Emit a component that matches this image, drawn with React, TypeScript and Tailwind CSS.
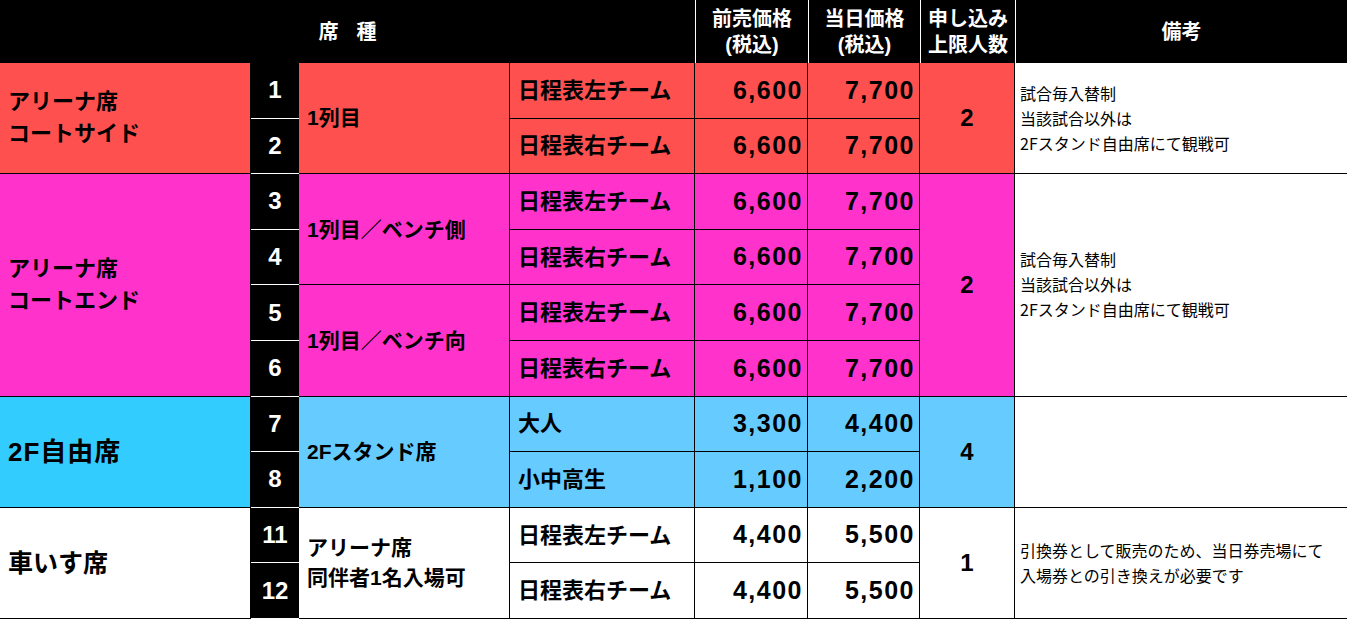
import type { ReactNode } from "react";

interface SeatRow {
  no: string;
  kind: string;
  advance: string;
  sameDay: string;
}

interface SubGroup {
  name: string[];
  nameSize: string;
  rows: SeatRow[];
}

interface SeatGroup {
  label: string[];
  labelSize: string;
  labelBg: string;
  bg: string;
  subs: SubGroup[];
  limit: string;
  notes: string[];
}

const leftRight = (advance: string, sameDay: string, start: number): SeatRow[] => [
  { no: String(start), kind: "日程表左チーム", advance, sameDay },
  { no: String(start + 1), kind: "日程表右チーム", advance, sameDay },
];

const notesSwap = ["試合毎入替制", "当該試合以外は", "2Fスタンド自由席にて観戦可"];

const groups: SeatGroup[] = [
  {
    label: ["アリーナ席", "コートサイド"],
    labelSize: "text-[22px] leading-[32px]",
    labelBg: "bg-[#ff5050]",
    bg: "bg-[#ff5050]",
    subs: [{ name: ["1列目"], nameSize: "text-[21px]", rows: leftRight("6,600", "7,700", 1) }],
    limit: "2",
    notes: notesSwap,
  },
  {
    label: ["アリーナ席", "コートエンド"],
    labelSize: "text-[22px] leading-[32px]",
    labelBg: "bg-[#ff33cc]",
    bg: "bg-[#ff33cc]",
    subs: [
      { name: ["1列目／ベンチ側"], nameSize: "text-[21px]", rows: leftRight("6,600", "7,700", 3) },
      { name: ["1列目／ベンチ向"], nameSize: "text-[21px]", rows: leftRight("6,600", "7,700", 5) },
    ],
    limit: "2",
    notes: notesSwap,
  },
  {
    label: ["2F自由席"],
    labelSize: "text-[26px] leading-[32px] tracking-[1px]",
    labelBg: "bg-[#33ccff]",
    bg: "bg-[#66ccff]",
    subs: [
      {
        name: ["2Fスタンド席"],
        nameSize: "text-[21px]",
        rows: [
          { no: "7", kind: "大人", advance: "3,300", sameDay: "4,400" },
          { no: "8", kind: "小中高生", advance: "1,100", sameDay: "2,200" },
        ],
      },
    ],
    limit: "4",
    notes: [],
  },
  {
    label: ["車いす席"],
    labelSize: "text-[25px] leading-[32px]",
    labelBg: "bg-white",
    bg: "bg-white",
    subs: [
      {
        name: ["アリーナ席", "同伴者1名入場可"],
        nameSize: "text-[21px] leading-[30px]",
        rows: leftRight("4,400", "5,500", 11),
      },
    ],
    limit: "1",
    notes: ["引換券として販売のため、当日券売場にて", "入場券との引き換えが必要です"],
  },
];

const span: Record<number, string> = {
  2: "row-span-2",
  4: "row-span-4",
};

function HeadCell({ children, className = "" }: { children: ReactNode; className?: string }) {
  return (
    <div
      className={`flex flex-col items-center justify-center bg-black text-white font-bold text-[20px] leading-[26px] ${className}`}
    >
      {children}
    </div>
  );
}

export default function App() {
  return (
    <div className="w-[1347px] h-[619px] bg-white font-['Liberation_Sans','Noto_Sans_CJK_JP',sans-serif] text-black">
      <div className="grid h-full grid-cols-[251px_48px_211px_185px_113px_112px_95px_1fr] grid-rows-[63px_repeat(10,minmax(0,1fr))]">
        <HeadCell className="col-span-4">
          <span className="tracking-[18px] pl-[18px]">席種</span>
        </HeadCell>
        <HeadCell className="border-l border-white">
          <span>前売価格</span>
          <span>(税込)</span>
        </HeadCell>
        <HeadCell className="border-l border-white">
          <span>当日価格</span>
          <span>(税込)</span>
        </HeadCell>
        <HeadCell className="border-l border-white">
          <span>申し込み</span>
          <span>上限人数</span>
        </HeadCell>
        <HeadCell className="border-l border-white">
          <span>備考</span>
        </HeadCell>

        {groups.map((g) => {
          const total = g.subs.reduce((n, s) => n + s.rows.length, 0);
          const cells: ReactNode[] = [];
          let first = true;
          g.subs.forEach((s, si) => {
            s.rows.forEach((r, ri) => {
              if (first) {
                cells.push(
                  <div
                    key="label"
                    className={`${span[total]} ${g.labelBg} border-r border-b border-black flex flex-col justify-center pl-2 font-bold ${g.labelSize}`}
                  >
                    {g.label.map((l) => (
                      <span key={l}>{l}</span>
                    ))}
                  </div>
                );
              }
              cells.push(
                <div
                  key={`no-${r.no}`}
                  className="bg-black text-white border-b border-white flex items-center justify-center font-bold text-[24px]"
                >
                  {r.no}
                </div>
              );
              if (ri === 0) {
                cells.push(
                  <div
                    key={`sub-${si}`}
                    className={`${span[s.rows.length]} ${g.bg} border-r border-b border-black flex flex-col justify-center pl-2 font-bold ${s.nameSize}`}
                  >
                    {s.name.map((n) => (
                      <span key={n}>{n}</span>
                    ))}
                  </div>
                );
              }
              cells.push(
                <div
                  key={`kind-${r.no}`}
                  className={`${g.bg} border-r border-b border-black flex items-center pl-2 font-bold text-[22px]`}
                >
                  {r.kind}
                </div>,
                <div
                  key={`adv-${r.no}`}
                  className={`${g.bg} border-r border-b border-black flex items-center justify-end pr-1 font-bold text-[25px] tracking-[1.5px]`}
                >
                  {r.advance}
                </div>,
                <div
                  key={`day-${r.no}`}
                  className={`${g.bg} border-r border-b border-black flex items-center justify-end pr-1 font-bold text-[25px] tracking-[1.5px]`}
                >
                  {r.sameDay}
                </div>
              );
              if (first) {
                cells.push(
                  <div
                    key="limit"
                    className={`${span[total]} ${g.bg} border-r border-b border-black flex items-center justify-center font-bold text-[24px]`}
                  >
                    {g.limit}
                  </div>,
                  <div
                    key="notes"
                    className={`${span[total]} bg-white border-b border-black flex flex-col justify-center pl-[5px] text-[16px] leading-[25px] font-['Noto_Sans_CJK_JP',sans-serif]`}
                  >
                    {g.notes.map((n) => (
                      <span key={n}>{n}</span>
                    ))}
                  </div>
                );
                first = false;
              }
            });
          });
          return cells;
        })}
      </div>
    </div>
  );
}
